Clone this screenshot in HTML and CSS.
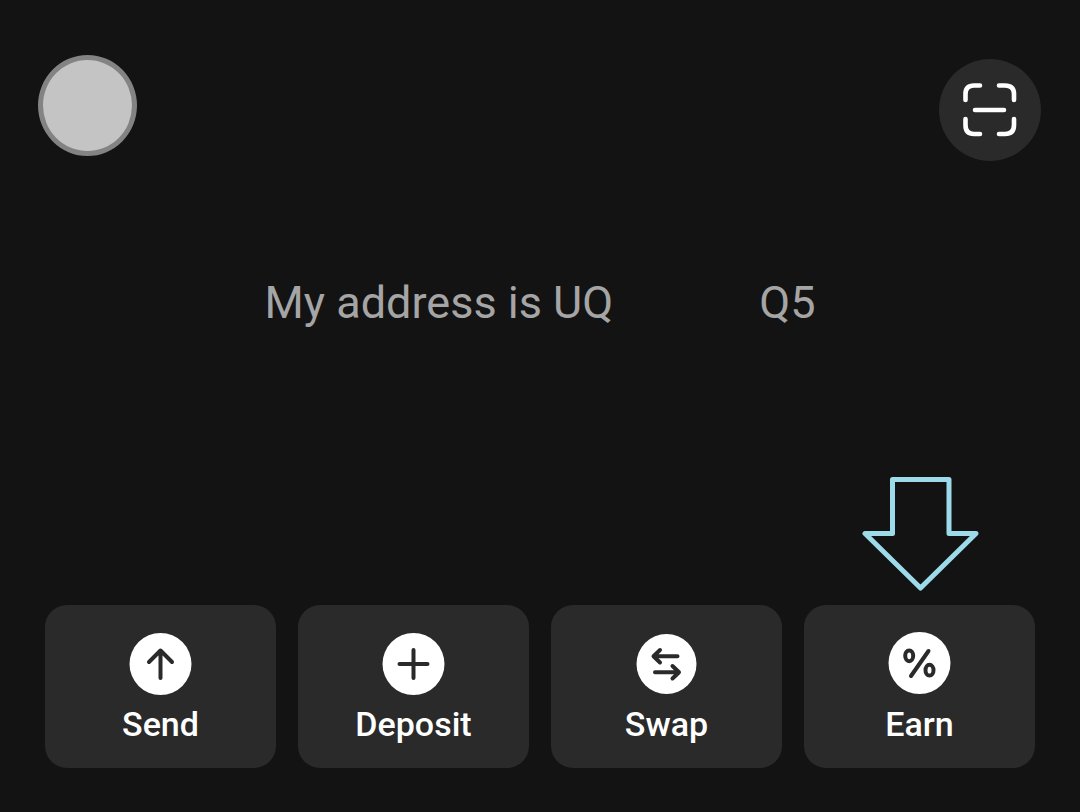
FILE: index.html
```html
<!DOCTYPE html>
<html lang="en">
<head>
  <meta charset="UTF-8">
  <meta name="viewport" content="width=device-width, initial-scale=1.0">
  <title>Wallet</title>
  <link rel="stylesheet" href="styles.css">
</head>
<body>
<div class="wallet">
  <header class="topbar">
    <button class="avatar" aria-label="Profile"></button>
    <button class="scan" aria-label="Scan">
      <svg viewBox="0 0 102 102" fill="none" stroke="#fff" stroke-width="4.6" stroke-linecap="round">
        <path d="M26.5 41V35Q26.5 26.5 35 26.5H41M60 26.5H66Q75 26.5 75 35V41M75 60V66Q75 75 66 75H60M41 75H35Q26.5 75 26.5 66V60M36 51H65"/>
      </svg>
    </button>
  </header>

  <p class="address"><span>My address is UQ</span><span>Q5</span></p>

  <nav class="actions">
    <div class="action">
      <button>
        <svg viewBox="0 0 62 62">
          <circle cx="30.5" cy="31" r="31"/>
          <path d="M30.5 45V17.5M19 29L30.5 17.5L42 29"/>
        </svg>
        Send
      </button>
    </div>
    <div class="action">
      <button>
        <svg viewBox="0 0 62 62">
          <circle cx="30.5" cy="31" r="31"/>
          <path d="M30.5 17V45M16.5 31H44.5"/>
        </svg>
        Deposit
      </button>
    </div>
    <div class="action">
      <button>
        <svg viewBox="0 0 62 62">
          <circle cx="30.5" cy="31" r="30"/>
          <path d="M41.5 23.2H18M24 17L17.5 23.2L24 29.5M19 39.2H43M36.5 33L43 39.2L36.5 45.5"/>
        </svg>
        Swap
      </button>
    </div>
    <div class="action">
      <svg class="pointer" viewBox="0 0 120 120">
        <path d="M32.5 4.5H89V58.5H116L60.5 113L5 58.5H32.5Z"/>
      </svg>
      <button>
        <svg viewBox="0 0 62 62">
          <circle cx="30.5" cy="30" r="31"/>
          <path d="M39.5 18L22 43"/>
          <ellipse cx="20.2" cy="22.8" rx="4" ry="5.4"/>
          <ellipse cx="40.5" cy="37.2" rx="4" ry="5.4"/>
        </svg>
        Earn
      </button>
    </div>
  </nav>
</div>
</body>
</html>
```
FILE: styles.css
```css
* { box-sizing: border-box; }
body { margin: 0; background: #131313; color: #fff; font-family: Roboto, "Liberation Sans", sans-serif; }
button { border: none; padding: 0; font-family: inherit; color: inherit; cursor: pointer; }
.wallet { min-height: 100vh; display: flex; flex-direction: column; padding: 55px 0 44px; }

.topbar { display: flex; justify-content: space-between; align-items: flex-start; padding: 0 39px 0 38px; }
.avatar { width: 99px; height: 101px; border-radius: 50%; background: #c4c4c4; border: 5px solid #838383; }
.scan { width: 102px; height: 102px; margin-top: 4px; border-radius: 50%; background: #2a2a2a; }
.scan svg { display: block; width: 100%; }

.address { display: flex; justify-content: center; gap: 146px; margin: 115px 0 0; font-size: 45px; line-height: 54px; color: #a5a5a5; }

.actions { display: grid; grid-template-columns: repeat(4, 1fr); gap: 22px; margin-top: auto; padding: 0 45px; }
.action { position: relative; }
.action button { width: 100%; display: flex; flex-direction: column; align-items: center; gap: 9px; padding: 28px 0 24px; border-radius: 22px; background: #2a2a2a; font-size: 34px; line-height: 40px; font-weight: 500; }
.action button svg { width: 62px; height: 62px; overflow: visible; }
.action circle { fill: #fff; }
.action button path, .action ellipse { fill: none; stroke: #2a2a2a; stroke-width: 4; stroke-linecap: round; stroke-linejoin: round; }

/* arrow pointing down at the button */
.pointer { position: absolute; left: 50%; bottom: 100%; width: 120px; height: 120px; margin: 0 0 10px -60px; }
.pointer path { fill: none; stroke: #9ddaea; stroke-width: 5; stroke-linejoin: round; }
```
